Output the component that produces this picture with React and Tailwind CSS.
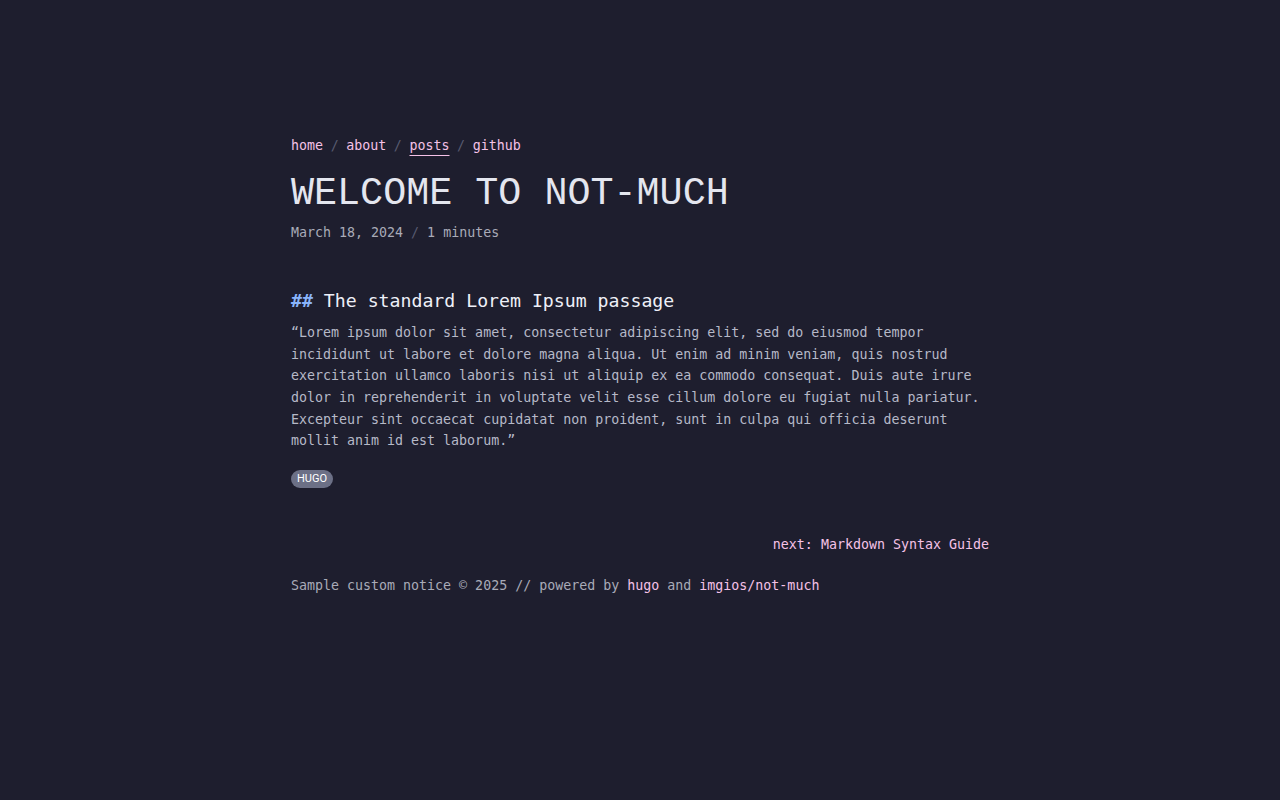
import React from "react";

const mono = { fontFamily: '"DejaVu Sans Mono", "Liberation Mono", monospace' };
const thin = { fontFamily: '"Liberation Mono", "DejaVu Sans Mono", monospace' };

const App = () => {
  return (
    <div className="min-h-screen bg-[#1e1e2e] text-[#cdd6f4]" style={mono}>
      <div className="mx-auto w-[698px] pt-[135px] pb-20 text-[13.3px] leading-[21.6px]">
        <nav className="flex gap-[7.6px] text-[#f5c2e7]">
          <a href="#">home</a>
          <span className="text-[#585b70]">/</span>
          <a href="#">about</a>
          <span className="text-[#585b70]">/</span>
          <a href="#" className="underline underline-offset-[5px] decoration-1">posts</a>
          <span className="text-[#585b70]">/</span>
          <a href="#">github</a>
        </nav>

        <h1 className="mt-[14px] text-[38.4px] leading-[46px] font-normal text-[#e4e6ef]" style={thin}>
          WELCOME TO NOT-MUCH
        </h1>
        <div className="mt-[5px] text-[#a9abb8]">
          March 18, 2024 <span className="text-[#585b70]">/</span> 1 minutes
        </div>

        <h2 className="mt-[44px] text-[18.2px] leading-[28px] text-[#eef0f8]">
          <span className="text-[#89b4fa] font-bold">##</span> The standard Lorem Ipsum passage
        </h2>
        <p className="mt-[7px] text-[#b6b9c8]">
          “Lorem ipsum dolor sit amet, consectetur adipiscing elit, sed do eiusmod tempor incididunt ut labore et dolore magna aliqua. Ut enim ad minim veniam, quis nostrud exercitation ullamco laboris nisi ut aliquip ex ea commodo consequat. Duis aute irure dolor in reprehenderit in voluptate velit esse cillum dolore eu fugiat nulla pariatur. Excepteur sint occaecat cupidatat non proident, sunt in culpa qui officia deserunt mollit anim id est laborum.”
        </p>

        <div className="mt-[18px] flex">
          <span
            className="h-[18px] px-[6px] rounded-full bg-[#6c7086] text-white text-[11px] leading-[18px]"
            style={{ fontFamily: "Roboto, sans-serif" }}
          >
            HUGO
          </span>
        </div>

        <div className="mt-[46px] flex justify-end text-[#f5c2e7]">
          <a href="#">next: Markdown Syntax Guide</a>
        </div>

        <footer className="mt-[20px] text-[#a9abb8]">
          Sample custom notice © 2025 // powered by <a href="#" className="text-[#f5c2e7]">hugo</a> and{" "}
          <a href="#" className="text-[#f5c2e7]">imgios/not-much</a>
        </footer>
      </div>
    </div>
  );
};

export default App;
